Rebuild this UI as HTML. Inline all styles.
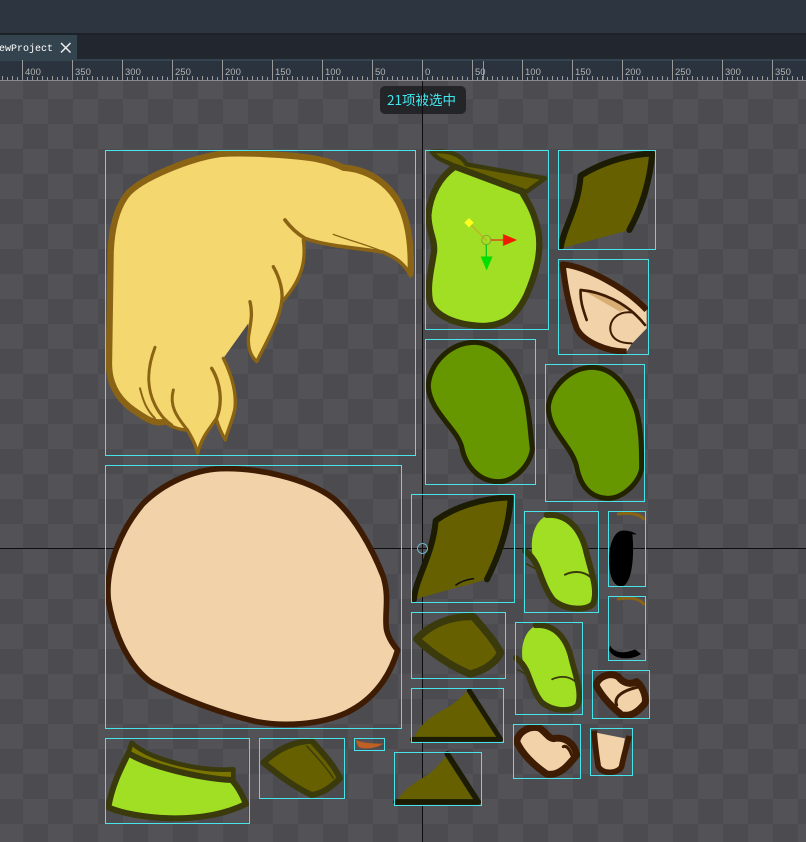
<!DOCTYPE html>
<html><head><meta charset="utf-8">
<style>
html,body{margin:0;padding:0;background:#4c4b50;width:806px;height:842px;overflow:hidden}
svg{display:block;position:absolute;left:0;top:0}
</style></head><body>
<svg width="806" height="842" viewBox="0 0 806 842" xmlns="http://www.w3.org/2000/svg">
<defs>
<pattern id="ck" x="23" y="74" width="50" height="50" patternUnits="userSpaceOnUse">
<rect width="50" height="50" fill="#535257"/>
<rect width="25" height="25" fill="#4c4b50"/>
<rect x="25" y="25" width="25" height="25" fill="#4c4b50"/>
</pattern>
<pattern id="tk" x="22" y="60" width="50" height="21" patternUnits="userSpaceOnUse">
<path d="M.5 0V20M5.5 17V20M10.5 16V20M15.5 17V20M20.5 16V20M25.5 17V20M30.5 16V20M35.5 17V20M40.5 16V20M45.5 17V20" stroke="#9a9a9a" stroke-width="1" fill="none"/>
</pattern>
</defs>
<rect width="806" height="33" fill="#2c3540"/>
<rect y="33" width="806" height="2" fill="#1d2226"/>
<rect y="35" width="806" height="24" fill="#22272f"/>
<rect y="35" width="77" height="24" fill="#34444f"/>
<rect y="59" width="806" height="2" fill="#34444f"/>
<text x="53" y="51" text-anchor="end" font-family="'Liberation Mono',monospace" font-size="10" fill="#fff">ewProject</text>
<path d="M61 43L70.500 52.500M70.500 43L61 52.500" stroke="#eee" stroke-width="1.500"/>
<rect y="61" width="806" height="20" fill="#2a333e"/>
<rect y="60" width="806" height="21" fill="url(#tk)"/>
<rect y="80" width="806" height="1" fill="#8a8a8a"/>
<rect x="483" y="61" width="1" height="19" fill="#8fae2a"/>
<g font-family="'Liberation Sans',sans-serif" font-size="9.500" fill="#b4b4b4">
<text x="25" y="75">400</text><text x="75" y="75">350</text><text x="125" y="75">300</text><text x="175" y="75">250</text><text x="225" y="75">200</text><text x="275" y="75">150</text><text x="325" y="75">100</text><text x="375" y="75">50</text><text x="425" y="75">0</text><text x="475" y="75">50</text><text x="525" y="75">100</text><text x="575" y="75">150</text><text x="625" y="75">200</text><text x="675" y="75">250</text><text x="725" y="75">300</text><text x="775" y="75">350</text>
</g>
<rect y="81" width="806" height="761" fill="url(#ck)"/>
<rect x="380" y="86" width="86" height="28" rx="5" fill="#242528"/>
<text x="387" y="105" font-family="'WenQuanYi Zen Hei','Noto Sans CJK SC',sans-serif" font-size="13.500" fill="#40e8ee">21项被选中</text>
<rect x="422" y="81" width="1" height="761" fill="#0d0d0d"/>
<rect y="548" width="806" height="1" fill="#0d0d0d"/>

<g stroke-linejoin="round" stroke-linecap="round">
<!-- hair -->
<g transform="translate(100,145) scale(.3333)">
<path d="M360 27C430 22 560 28 640 40C680 48 710 58 730 68C800 72 860 110 895 170C925 225 935 300 932 390C910 350 880 335 850 322C790 310 680 305 615 280C618 340 610 400 548 468C540 520 505 580 470 650C450 630 445 610 445 580L445 535L370 640C395 690 410 740 405 790C400 820 385 850 376 885C365 865 355 845 350 825C330 850 305 875 293 925C285 890 270 870 262 855C240 855 210 845 195 830C160 840 130 815 100 795C50 760 25 710 27 650C30 500 30 400 32 320C35 250 50 190 80 150C120 100 270 40 360 27Z" fill="#f4d76f"/>
<g fill="none" stroke="#8a6414">
<path d="M932 385C935 300 925 225 895 170C860 110 800 72 730 68C710 58 680 48 640 40C560 28 430 22 360 27C270 40 120 100 80 150C50 190 35 250 32 320C30 400 30 500 27 650C25 710 50 760 100 795C130 815 160 840 195 830" stroke-width="19"/>
<path d="M932 392C910 350 880 335 850 322C790 310 680 305 615 280C590 265 570 245 555 225" stroke-width="11"/>
<path d="M610 285C618 340 610 400 548 468" stroke-width="10"/>
<path d="M520 365C540 400 550 440 545 470C540 520 505 580 470 650C450 630 445 610 445 580C450 540 460 510 450 470" stroke-width="10"/>
<path d="M370 640C395 690 410 740 405 790C400 820 385 850 376 885C365 865 355 845 350 825" stroke-width="10"/>
<path d="M335 670C360 710 370 770 350 820C330 850 305 875 293 925C285 890 270 870 262 855C240 855 210 845 195 830" stroke-width="10"/>
<path d="M165 607C145 660 135 720 165 780C180 810 195 825 215 840" stroke-width="9"/>
<path d="M120 730C130 770 140 795 165 820" stroke-width="6"/>
<path d="M220 735C205 790 240 825 262 855" stroke-width="9"/>
<path d="M700 268C760 290 820 305 860 325" stroke-width="4"/>
</g></g>
<!-- face -->
<g transform="translate(100,460) scale(.3333)">
<path d="M360 26C470 22 620 55 700 115C760 165 815 260 850 350C870 415 852 465 860 510C866 535 880 555 893 570C870 650 820 720 740 758C660 795 550 800 470 785C380 765 250 720 155 668C80 615 40 510 25 420C15 320 65 205 130 130C190 70 280 30 360 26Z" fill="#f2d2a8" stroke="#3d1c03" stroke-width="17"/>
</g>
<!-- upper group -->
<g transform="translate(420,145) scale(.3333)">
<path d="M35 20C80 15 120 25 140 58L375 100L320 140L105 65C85 50 50 45 35 20Z" fill="#666000" stroke="#3a3a0c" stroke-width="13"/>
<path d="M105 65C60 95 30 150 25 210C25 260 45 280 42 320C35 370 20 420 30 470C45 510 100 540 190 543C260 540 290 510 320 450C350 380 365 320 355 260C345 210 330 180 305 140Z" fill="#a1df24" stroke="#3a3a0c" stroke-width="19"/>
<path d="M147 233L198 285" stroke="#bdb82a" stroke-width="5"/>
<path d="M147 219L161 233L147 247L133 233Z" fill="#ffff20"/>
<circle cx="199" cy="285" r="14" fill="none" stroke="#8aa82a" stroke-width="3"/>
<path d="M213 285H250" stroke="#e83018" stroke-width="4"/>
<path d="M250 268L290 285L250 302Z" fill="#f01c00" stroke="#f01c00" stroke-width="1"/>
<path d="M199 300V335" stroke="#10c820" stroke-width="4"/>
<path d="M183 335H217L200 375Z" fill="#00e000" stroke="#00e000" stroke-width="1"/>
<path d="M423 310C430 250 475 190 482 92C550 50 620 30 697 25C690 100 670 180 628 255Z" fill="#666000"/>
<path d="M423 305C430 250 475 190 482 92C550 50 620 30 697 25C690 100 670 180 628 255" fill="none" stroke="#1c1c04" stroke-width="18"/>
<path d="M428 358C500 365 620 430 680 495V550L635 597L620 620C560 620 490 590 470 550C445 480 435 420 428 358Z" fill="#f2d2a8"/>
<path d="M490 437L600 500L625 490C580 460 530 445 490 437Z" fill="#d7ad74"/>
<path d="M680 495C620 430 500 365 428 358C435 420 445 480 470 550C490 590 560 620 620 620" fill="none" stroke="#3d1c03" stroke-width="18" stroke-linecap="butt"/>
<path d="M500 525C488 490 480 465 482 435C540 440 620 470 675 540" fill="none" stroke="#3d1c03" stroke-width="8"/>
<path d="M640 503C590 495 565 530 572 560C580 590 610 595 635 595" fill="none" stroke="#3d1c03" stroke-width="6"/>
</g>
<g transform="translate(420,335) scale(.3333)" fill="#669600" stroke="#232300" stroke-width="15">
<path d="M25 155C25 90 90 20 165 22C240 25 290 100 315 180C330 240 330 290 337 340C335 380 290 440 235 440C175 440 135 390 125 335C110 280 30 230 25 155Z"/>
<path d="M385 215C390 160 450 95 520 97C590 100 630 170 650 230C665 290 665 350 665 400C660 440 610 490 565 490C510 490 480 450 470 395C455 330 385 290 385 215Z"/>
</g>
<!-- middle group -->
<g transform="translate(405,490) scale(.3333)">
<path d="M27 328C30 270 85 190 92 92C150 50 230 25 317 22C312 110 285 190 246 268Z" fill="#666000"/>
<path d="M27 328C30 270 85 190 92 92C150 50 230 25 317 22C312 110 285 190 246 268" fill="none" stroke="#1c1c04" stroke-width="18"/>
<path d="M153 285C170 272 190 268 205 266" fill="none" stroke="#111" stroke-width="5"/>
<path d="M35 447C80 400 140 378 205 380C240 420 270 455 287 488C270 525 225 545 195 552C140 530 80 490 35 447Z" fill="#666000" stroke="#3a3a0c" stroke-width="22"/>
<path d="M430 75C390 90 375 140 382 190C395 240 420 290 445 325C480 355 530 360 555 345C570 330 570 300 565 260C550 210 520 110 470 85Z" fill="#a1df24"/>
<path d="M425 75C490 70 530 120 545 190C560 250 580 300 565 340C545 365 480 360 445 330C420 300 410 260 395 225C385 205 370 190 360 183" fill="none" stroke="#3a3a0c" stroke-width="18"/>
<path d="M365 222L390 235" fill="none" stroke="#3a3a0c" stroke-width="5"/>
<path d="M480 254C500 245 530 240 555 260" fill="none" stroke="#3a3a0c" stroke-width="6"/>
<path d="M640 72C670 68 700 70 716 86" fill="none" stroke="#8a6414" stroke-width="9"/>
<path d="M612 210C612 160 630 120 655 122C670 122 685 125 695 133L682 133C688 180 685 288 648 289C622 288 612 250 612 210Z" fill="#000"/>
<path d="M640 327C670 322 700 322 716 342" fill="none" stroke="#8a6414" stroke-width="9"/>
<path d="M615 466C625 485 650 495 690 478L708 492C680 512 625 510 612 480Z" fill="#000"/>
</g>
<!-- lime 3 -->
<g transform="translate(515.300,622.300) scale(.905) translate(-524.300,-511.700) translate(405,490) scale(.3333)">
<path d="M430 75C390 90 375 140 382 190C395 240 420 290 445 325C480 355 530 360 555 345C570 330 570 300 565 260C550 210 520 110 470 85Z" fill="#a1df24"/>
<path d="M425 75C490 70 530 120 545 190C560 250 580 300 565 340C545 365 480 360 445 330C420 300 410 260 395 225C385 205 370 190 360 183" fill="none" stroke="#3a3a0c" stroke-width="19"/>
<path d="M365 222L390 235" fill="none" stroke="#3a3a0c" stroke-width="5"/>
<path d="M480 254C500 245 530 240 555 260" fill="none" stroke="#3a3a0c" stroke-width="6"/>
</g>
<!-- lower right -->
<g transform="translate(390,670) scale(.3333)">
<path d="M72 205C85 170 110 150 150 125C190 105 210 85 235 60L332 210Z" fill="#666000"/>
<path d="M238 62L332 208H68" fill="none" stroke="#1c1c04" stroke-width="15"/>
<path d="M20 395C35 365 70 340 105 320C135 300 150 280 172 252L265 398Z" fill="#666000"/>
<path d="M172 252L265 396H18" fill="none" stroke="#1c1c04" stroke-width="17"/>
<path d="M380 215C385 185 420 165 450 175C470 190 480 210 495 205C530 200 555 225 560 255C540 280 510 320 470 312C430 285 395 250 380 215Z" fill="#f2d2a8" stroke="#3d1c03" stroke-width="21"/>
<path d="M520 230C530 225 540 240 545 255" fill="none" stroke="#3d1c03" stroke-width="9"/>
<path d="M618 45C625 20 660 5 685 20C700 40 720 45 740 35C760 50 770 85 765 100C745 125 725 140 695 135C665 110 635 80 618 45Z" fill="#f2d2a8" stroke="#3d1c03" stroke-width="21"/>
<path d="M680 105C670 80 700 60 750 50" fill="none" stroke="#3d1c03" stroke-width="9"/>
<path d="M618 188L705 205L690 285C680 305 640 305 630 285Z" fill="#f2d2a8"/>
<path d="M612 182C615 220 620 260 625 290C640 315 685 310 695 290C700 260 710 230 718 198" fill="none" stroke="#3d1c03" stroke-width="17" stroke-linecap="butt"/>
</g>
<!-- lower left -->
<g transform="translate(100,730) scale(.3333)">
<path d="M95 38C150 90 300 125 400 118V152C300 150 160 110 85 68Z" fill="#7a7600" stroke="#3a3a0c" stroke-width="14"/>
<path d="M85 70C60 120 35 170 25 232C100 265 300 290 438 222C425 190 410 165 395 150C300 145 150 110 85 70Z" fill="#a1df24" stroke="#3a3a0c" stroke-width="18"/>
<path d="M490 98C530 60 580 35 635 32C670 70 705 110 720 145C695 170 670 190 635 195C580 170 530 130 490 98Z" fill="#666000" stroke="#3a3a0c" stroke-width="18"/>
<path d="M620 48C650 80 685 120 700 145" fill="none" stroke="#3a3a0c" stroke-width="4"/>
<path d="M767 30C790 40 830 42 850 40C835 55 790 60 775 50Z" fill="#bf6022"/>
</g>
</g>
<!-- boxes -->
<g fill="none" stroke="#48e4ea" stroke-width="1">
<rect x="105.500" y="150.500" width="310" height="305"/>
<rect x="105.500" y="465.500" width="296" height="263"/>
<rect x="425.500" y="150.500" width="123" height="179"/>
<rect x="558.500" y="150.500" width="97" height="99"/>
<rect x="558.500" y="259.500" width="90" height="95"/>
<rect x="425.500" y="339.500" width="110" height="145"/>
<rect x="545.500" y="364.500" width="99" height="137"/>
<rect x="411.500" y="494.500" width="103" height="108"/>
<rect x="524.500" y="511.500" width="74" height="101"/>
<rect x="608.500" y="511.500" width="37" height="75"/>
<rect x="608.500" y="596.500" width="37" height="64"/>
<rect x="411.500" y="612.500" width="94" height="66"/>
<rect x="515.500" y="622.500" width="67" height="92"/>
<rect x="592.500" y="670.500" width="57" height="48"/>
<rect x="411.500" y="688.500" width="92" height="54"/>
<rect x="513.500" y="724.500" width="67" height="54"/>
<rect x="590.500" y="728.500" width="42" height="47"/>
<rect x="105.500" y="738.500" width="144" height="85"/>
<rect x="259.500" y="738.500" width="85" height="60"/>
<rect x="354.500" y="738.500" width="30" height="12"/>
<rect x="394.500" y="752.500" width="87" height="53"/>
</g>
<circle cx="422.500" cy="548.500" r="5" fill="none" stroke="#6fb4c4" stroke-width="1"/>
</svg>
</body></html>
